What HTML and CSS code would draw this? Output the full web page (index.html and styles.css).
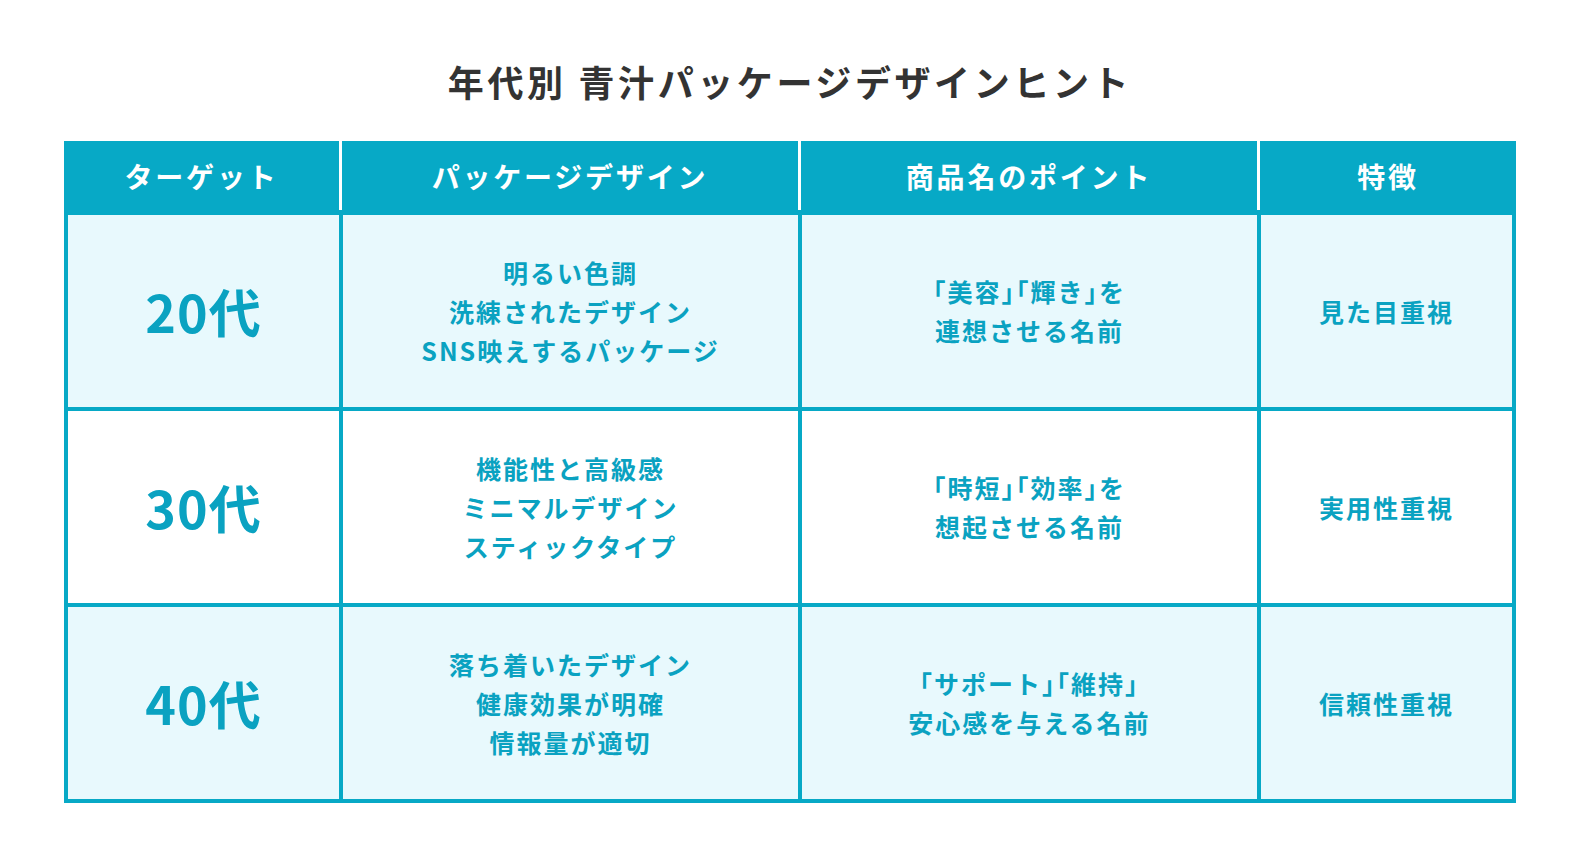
FILE: index.html
```html
<!DOCTYPE html>
<html lang="ja">
<head>
<meta charset="utf-8">
<title>年代別 青汁パッケージデザインヒント</title>
<link rel="stylesheet" href="styles.css">
</head>
<body>
<h1 class="title">年代別 青汁パッケージデザインヒント</h1>
<div class="table">
  <div class="thead">
    <div class="th">ターゲット</div>
    <div class="th">パッケージデザイン</div>
    <div class="th">商品名のポイント</div>
    <div class="th th-last">特徴</div>
  </div>
  <div class="tbody">
    <div class="td age tint">20代</div>
    <div class="td tint">明るい色調<br>洗練されたデザイン<br>SNS映えするパッケージ</div>
    <div class="td name tint">「美容」「輝き」を<br>連想させる名前</div>
    <div class="td tint">見た目重視</div>

    <div class="td age">30代</div>
    <div class="td">機能性と高級感<br>ミニマルデザイン<br>スティックタイプ</div>
    <div class="td name">「時短」「効率」を<br>想起させる名前</div>
    <div class="td">実用性重視</div>

    <div class="td age tint">40代</div>
    <div class="td tint">落ち着いたデザイン<br>健康効果が明確<br>情報量が適切</div>
    <div class="td name tint">「サポート」「維持」<br>安心感を与える名前</div>
    <div class="td tint">信頼性重視</div>
  </div>
</div>
</body>
</html>
```

FILE: styles.css
```css
* { box-sizing: border-box; }

html, body {
  margin: 0;
  padding: 0;
  background: #ffffff;
}

body {
  width: 1580px;
  height: 863px;
  font-family: "Noto Sans CJK JP", "Noto Sans", sans-serif;
}

.title {
  margin: 0;
  padding-top: 59px;
  height: 141px;
  line-height: 44px;
  font-size: 36px;
  font-weight: 700;
  letter-spacing: 0.1em;
  color: #333333;
  text-align: center;
}

.table {
  margin: 0 64px;
  width: 1452px;
}

.thead {
  display: grid;
  grid-template-columns: 278px 459px 459px 256px;
  background: #07a9c6;
  padding-bottom: 5px;
}

.th {
  height: 69px;
  display: flex;
  align-items: center;
  justify-content: center;
  border-right: 3px solid #ffffff;
  color: #ffffff;
  font-size: 28px;
  font-weight: 700;
  letter-spacing: 0.1em;
}

.th-last {
  border-right: none;
}

.tbody {
  display: grid;
  grid-template-columns: 271px 455px 455px 251px;
  grid-auto-rows: 192px;
  gap: 4px;
  padding: 0 4px 4px 4px;
  background: #07a9c6;
}

.td {
  background: #ffffff;
  display: flex;
  align-items: center;
  justify-content: center;
  text-align: center;
  color: #0aa2c1;
  font-size: 25px;
  line-height: 39px;
  font-weight: 700;
  letter-spacing: 0.08em;
}

.name {
  font-feature-settings: "halt";
}

.tint {
  background: #e8f9fd;
}

.age {
  font-size: 52px;
  letter-spacing: 0.02em;
  line-height: 60px;
}
```
